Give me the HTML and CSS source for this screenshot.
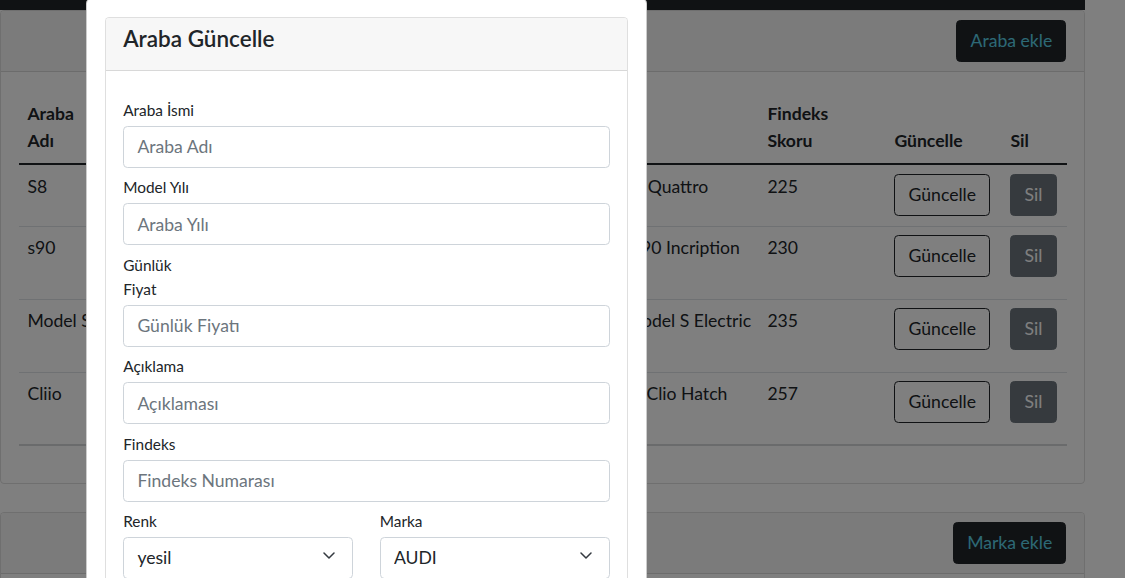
FILE: index.html
```html
<!DOCTYPE html>
<html lang="tr">
<head>
<meta charset="utf-8">
<title>Araba Güncelle</title>
<link rel="stylesheet" href="styles.css">
</head>
<body>
<div class="screen">
  <div class="page">
    <div class="navbar"></div>
    <section class="card">
      <div class="card-header header-end">
        <button class="btn btn-dark">Araba ekle</button>
      </div>
      <div class="card-body list-body">
        <table class="table">
          <colgroup>
            <col class="c-name"><col class="c-brand"><col class="c-color"><col class="c-year"><col class="c-price"><col class="c-desc"><col class="c-score"><col class="c-edit"><col class="c-del">
          </colgroup>
          <thead>
            <tr><th>Araba<br>Adı</th><th>Marka</th><th>Renk</th><th>Yıl</th><th>Fiyat</th><th>Model</th><th>Findeks<br>Skoru</th><th>Güncelle</th><th>Sil</th></tr>
          </thead>
          <tbody>
            <tr class="short"><td>S8</td><td>Audi</td><td>siyah</td><td>2020</td><td>750</td><td>Audi S8 Quattro</td><td>225</td><td><button class="btn btn-outline">Güncelle</button></td><td><button class="btn btn-secondary">Sil</button></td></tr>
            <tr class="tall"><td>s90</td><td>Volvo</td><td>beyaz</td><td>2021</td><td>800</td><td>Volvo S90 Incription</td><td>230</td><td><button class="btn btn-outline">Güncelle</button></td><td><button class="btn btn-secondary">Sil</button></td></tr>
            <tr class="tall"><td>Model S</td><td>Tesla</td><td>kırmızı</td><td>2021</td><td>1200</td><td>Tesla Model S Electric</td><td>235</td><td><button class="btn btn-outline">Güncelle</button></td><td><button class="btn btn-secondary">Sil</button></td></tr>
            <tr class="tall"><td>Cliio</td><td>Renault</td><td>yesil</td><td>2019</td><td>400</td><td>Renault Clio Hatch</td><td>257</td><td><button class="btn btn-outline">Güncelle</button></td><td><button class="btn btn-secondary">Sil</button></td></tr>
          </tbody>
        </table>
      </div>
    </section>
    <section class="card card-second">
      <div class="card-header header-end">
        <button class="btn btn-dark">Marka ekle</button>
      </div>
      <div class="card-body"></div>
    </section>
  </div>

  <div class="backdrop"></div>

  <div class="modal">
    <div class="card">
      <div class="card-header">
        <h5 class="modal-title">Araba Güncelle</h5>
      </div>
      <div class="card-body form">
        <div class="field">
          <label class="form-label">Araba İsmi</label>
          <input class="form-control" type="text" placeholder="Araba Adı">
        </div>
        <div class="field">
          <label class="form-label">Model Yılı</label>
          <input class="form-control" type="text" placeholder="Araba Yılı">
        </div>
        <div class="field">
          <label class="form-label">Günlük<br>Fiyat</label>
          <input class="form-control" type="text" placeholder="Günlük Fiyatı">
        </div>
        <div class="field">
          <label class="form-label">Açıklama</label>
          <input class="form-control" type="text" placeholder="Açıklaması">
        </div>
        <div class="field">
          <label class="form-label">Findeks</label>
          <input class="form-control" type="text" placeholder="Findeks Numarası">
        </div>
        <div class="field-row">
          <div class="field">
            <label class="form-label">Renk</label>
            <div class="select-wrap">
              <select class="form-select"><option>yesil</option></select>
              <svg class="chevron" viewBox="0 0 12 7" width="12" height="7"><path d="M1 1l5 5 5-5" fill="none" stroke="#343a40" stroke-width="1.5" stroke-linecap="round" stroke-linejoin="round"/></svg>
            </div>
          </div>
          <div class="field">
            <label class="form-label">Marka</label>
            <div class="select-wrap">
              <select class="form-select"><option>AUDI</option></select>
              <svg class="chevron" viewBox="0 0 12 7" width="12" height="7"><path d="M1 1l5 5 5-5" fill="none" stroke="#343a40" stroke-width="1.5" stroke-linecap="round" stroke-linejoin="round"/></svg>
            </div>
          </div>
        </div>
      </div>
    </div>
  </div>
</div>
</body>
</html>
```

FILE: styles.css
```css
*, *::before, *::after { box-sizing: border-box; }

body {
  margin: 0;
  background: #fff;
  font-family: Lato, "Open Sans", sans-serif;
  font-size: 17.6px;
  line-height: 1.5;
  color: #212529;
}

.screen {
  position: relative;
  width: 1125px;
  height: 578px;
  overflow: hidden;
  background: #fff;
}

.page { width: 1085px; }

.navbar {
  height: 10px;
  background: #212529;
}

.card {
  background: #fff;
  border: 1px solid rgba(0, 0, 0, .125);
  border-radius: 4.4px;
}

.card-second { margin-top: 28px; }

.card-header {
  padding: 8.8px 17.6px;
  background: #f7f7f7;
  border-bottom: 1px solid rgba(0, 0, 0, .125);
  border-radius: 3.4px 3.4px 0 0;
}

.header-end {
  display: flex;
  justify-content: flex-end;
  padding-top: 9px;
  padding-bottom: 9px;
}

.card-body { padding: 17.6px; }

.list-body { padding-top: 20.6px; }

.btn {
  display: inline-block;
  height: 42px;
  font-family: inherit;
  font-size: 17.6px;
  line-height: 26.4px;
  padding: 6.6px 13.2px;
  border: 1px solid transparent;
  border-radius: 4.4px;
  background: transparent;
  color: #212529;
  vertical-align: top;
}

.btn-dark {
  background: #212529;
  border-color: #212529;
  color: #5ad2ea;
}

.btn-outline {
  border-color: #212529;
  color: #212529;
}

.btn-secondary {
  background: #6c757d;
  border-color: #6c757d;
  color: #fff;
}

/* table */
.table {
  width: 100%;
  border-collapse: collapse;
  table-layout: fixed;
  margin-bottom: 19.6px;
}

.c-name { width: 92px; }
.c-brand { width: 120px; }
.c-color { width: 100px; }
.c-year { width: 110px; }
.c-price { width: 134px; }
.c-desc { width: 184px; }
.c-score { width: 127px; }
.c-edit { width: 116px; }
.c-del { width: 65px; }

.table th,
.table td {
  padding: 8.8px;
  text-align: left;
  vertical-align: top;
  border-bottom: 1px solid #dee2e6;
  line-height: 26.4px;
  white-space: nowrap;
}

.table thead th {
  vertical-align: bottom;
  font-weight: 700;
}

.table tbody { border-top: 2px solid #212529; }

.table tbody tr.short td { height: 62px; }
.table tbody tr.tall td { height: 73px; }

.table tbody tr:last-child td { border-bottom: 2px solid #d4d6d8; }

/* overlay */
.backdrop {
  position: absolute;
  inset: 0;
  background: rgba(0, 0, 0, .5);
}

.modal {
  position: absolute;
  left: 86px;
  top: -2px;
  width: 561px;
  height: 640px;
  padding: 17.6px;
  background: #fff;
  border: 1px solid rgba(0, 0, 0, .2);
  border-radius: 5.5px;
}

.modal-title {
  margin: 0 0 8.8px;
  font-size: 22.5px;
  font-weight: 600;
  line-height: 26.4px;
  color: #212529;
}

.form { padding-top: 26.4px; }

.field { margin-bottom: 7.5px; }

.form-label {
  display: block;
  font-size: 15.4px;
  line-height: 24px;
  margin-bottom: 4px;
}

.form-control,
.form-select {
  display: block;
  width: 100%;
  height: 42px;
  padding: 6.6px 13.2px;
  font-family: inherit;
  font-size: 17.6px;
  line-height: 26.4px;
  color: #212529;
  background: #fff;
  border: 1px solid #ced4da;
  border-radius: 4.4px;
}

.form-control::placeholder { color: #6c757d; }

.form-select {
  appearance: none;
  -webkit-appearance: none;
  padding-right: 39.6px;
}

.field-row {
  display: grid;
  grid-template-columns: 1fr 1fr;
  column-gap: 26.4px;
}

.select-wrap { position: relative; }

.chevron {
  position: absolute;
  right: 18px;
  top: 15px;
  pointer-events: none;
}
```
